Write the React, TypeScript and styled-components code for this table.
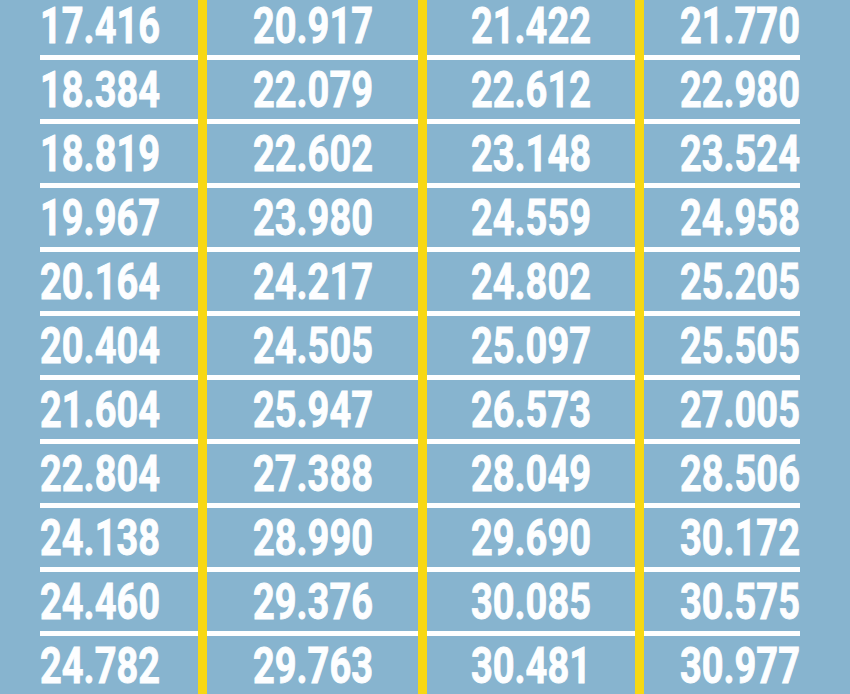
import styled, {createGlobalStyle} from 'styled-components';

const rows: string[][] = [
    ['17.416', '20.917', '21.422', '21.770'],
    ['18.384', '22.079', '22.612', '22.980'],
    ['18.819', '22.602', '23.148', '23.524'],
    ['19.967', '23.980', '24.559', '24.958'],
    ['20.164', '24.217', '24.802', '25.205'],
    ['20.404', '24.505', '25.097', '25.505'],
    ['21.604', '25.947', '26.573', '27.005'],
    ['22.804', '27.388', '28.049', '28.506'],
    ['24.138', '28.990', '29.690', '30.172'],
    ['24.460', '29.376', '30.085', '30.575'],
    ['24.782', '29.763', '30.481', '30.977'],
];

type Align = 'left' | 'center' | 'right';
const aligns: Align[] = ['left', 'center', 'center', 'right'];

const GlobalStyle = createGlobalStyle`
    html, body {
        margin: 0;
        padding: 0;
        height: 100%;
        overflow: hidden;
        background-color: #87b4cf;
    }
`;

const Page = styled.div`
    padding: 0 50px 0 40px;
    margin-top: -4px;
`;

const Table = styled.div`
    display: grid;
    grid-template-columns: 158px 9px 211px 9px 208px 9px 156px;
    grid-auto-rows: 64px;
`;

const Cell = styled.div<{align: Align; col: number}>`
    grid-column: ${props => props.col};
    height: 59px;
    border-bottom: 5px solid #ffffff;
    display: flex;
    align-items: center;
    justify-content: ${props => props.align === 'left' ? 'flex-start' : props.align === 'right' ? 'flex-end' : 'center'};
`;

// white lines run across the divider columns too, yellow sits on top
const Gap = styled.div<{col: number}>`
    grid-column: ${props => props.col};
    height: 59px;
    border-bottom: 5px solid #ffffff;
`;

const Value = styled.span<{align: Align}>`
    display: inline-block;
    font-family: Roboto, "Liberation Sans", sans-serif;
    font-weight: 700;
    font-size: 50px;
    line-height: 50px;
    color: #fdfeff;
    -webkit-text-stroke: 0.9px #fdfeff;
    transform: scaleX(0.76);
    transform-origin: ${props => props.align};
`;

const Divider = styled.div<{col: number}>`
    grid-column: ${props => props.col};
    grid-row: 1 / span ${rows.length};
    background-color: #f7d813;
    z-index: 1;
`;

function App() {
    return (
        <Page>
            <GlobalStyle />
            <Table>
                {rows.map((row, r) => (
                    <>
                        {row.map((value, c) => (
                            <Cell key={`c${r}-${c}`} align={aligns[c]} col={c * 2 + 1} style={{gridRow: r + 1}}>
                                <Value align={aligns[c]}>{value}</Value>
                            </Cell>
                        ))}
                        {[2, 4, 6].map(col => (
                            <Gap key={`g${r}-${col}`} col={col} style={{gridRow: r + 1}} />
                        ))}
                    </>
                ))}
                <Divider col={2} />
                <Divider col={4} />
                <Divider col={6} />
            </Table>
        </Page>
    );
}

export default App;
